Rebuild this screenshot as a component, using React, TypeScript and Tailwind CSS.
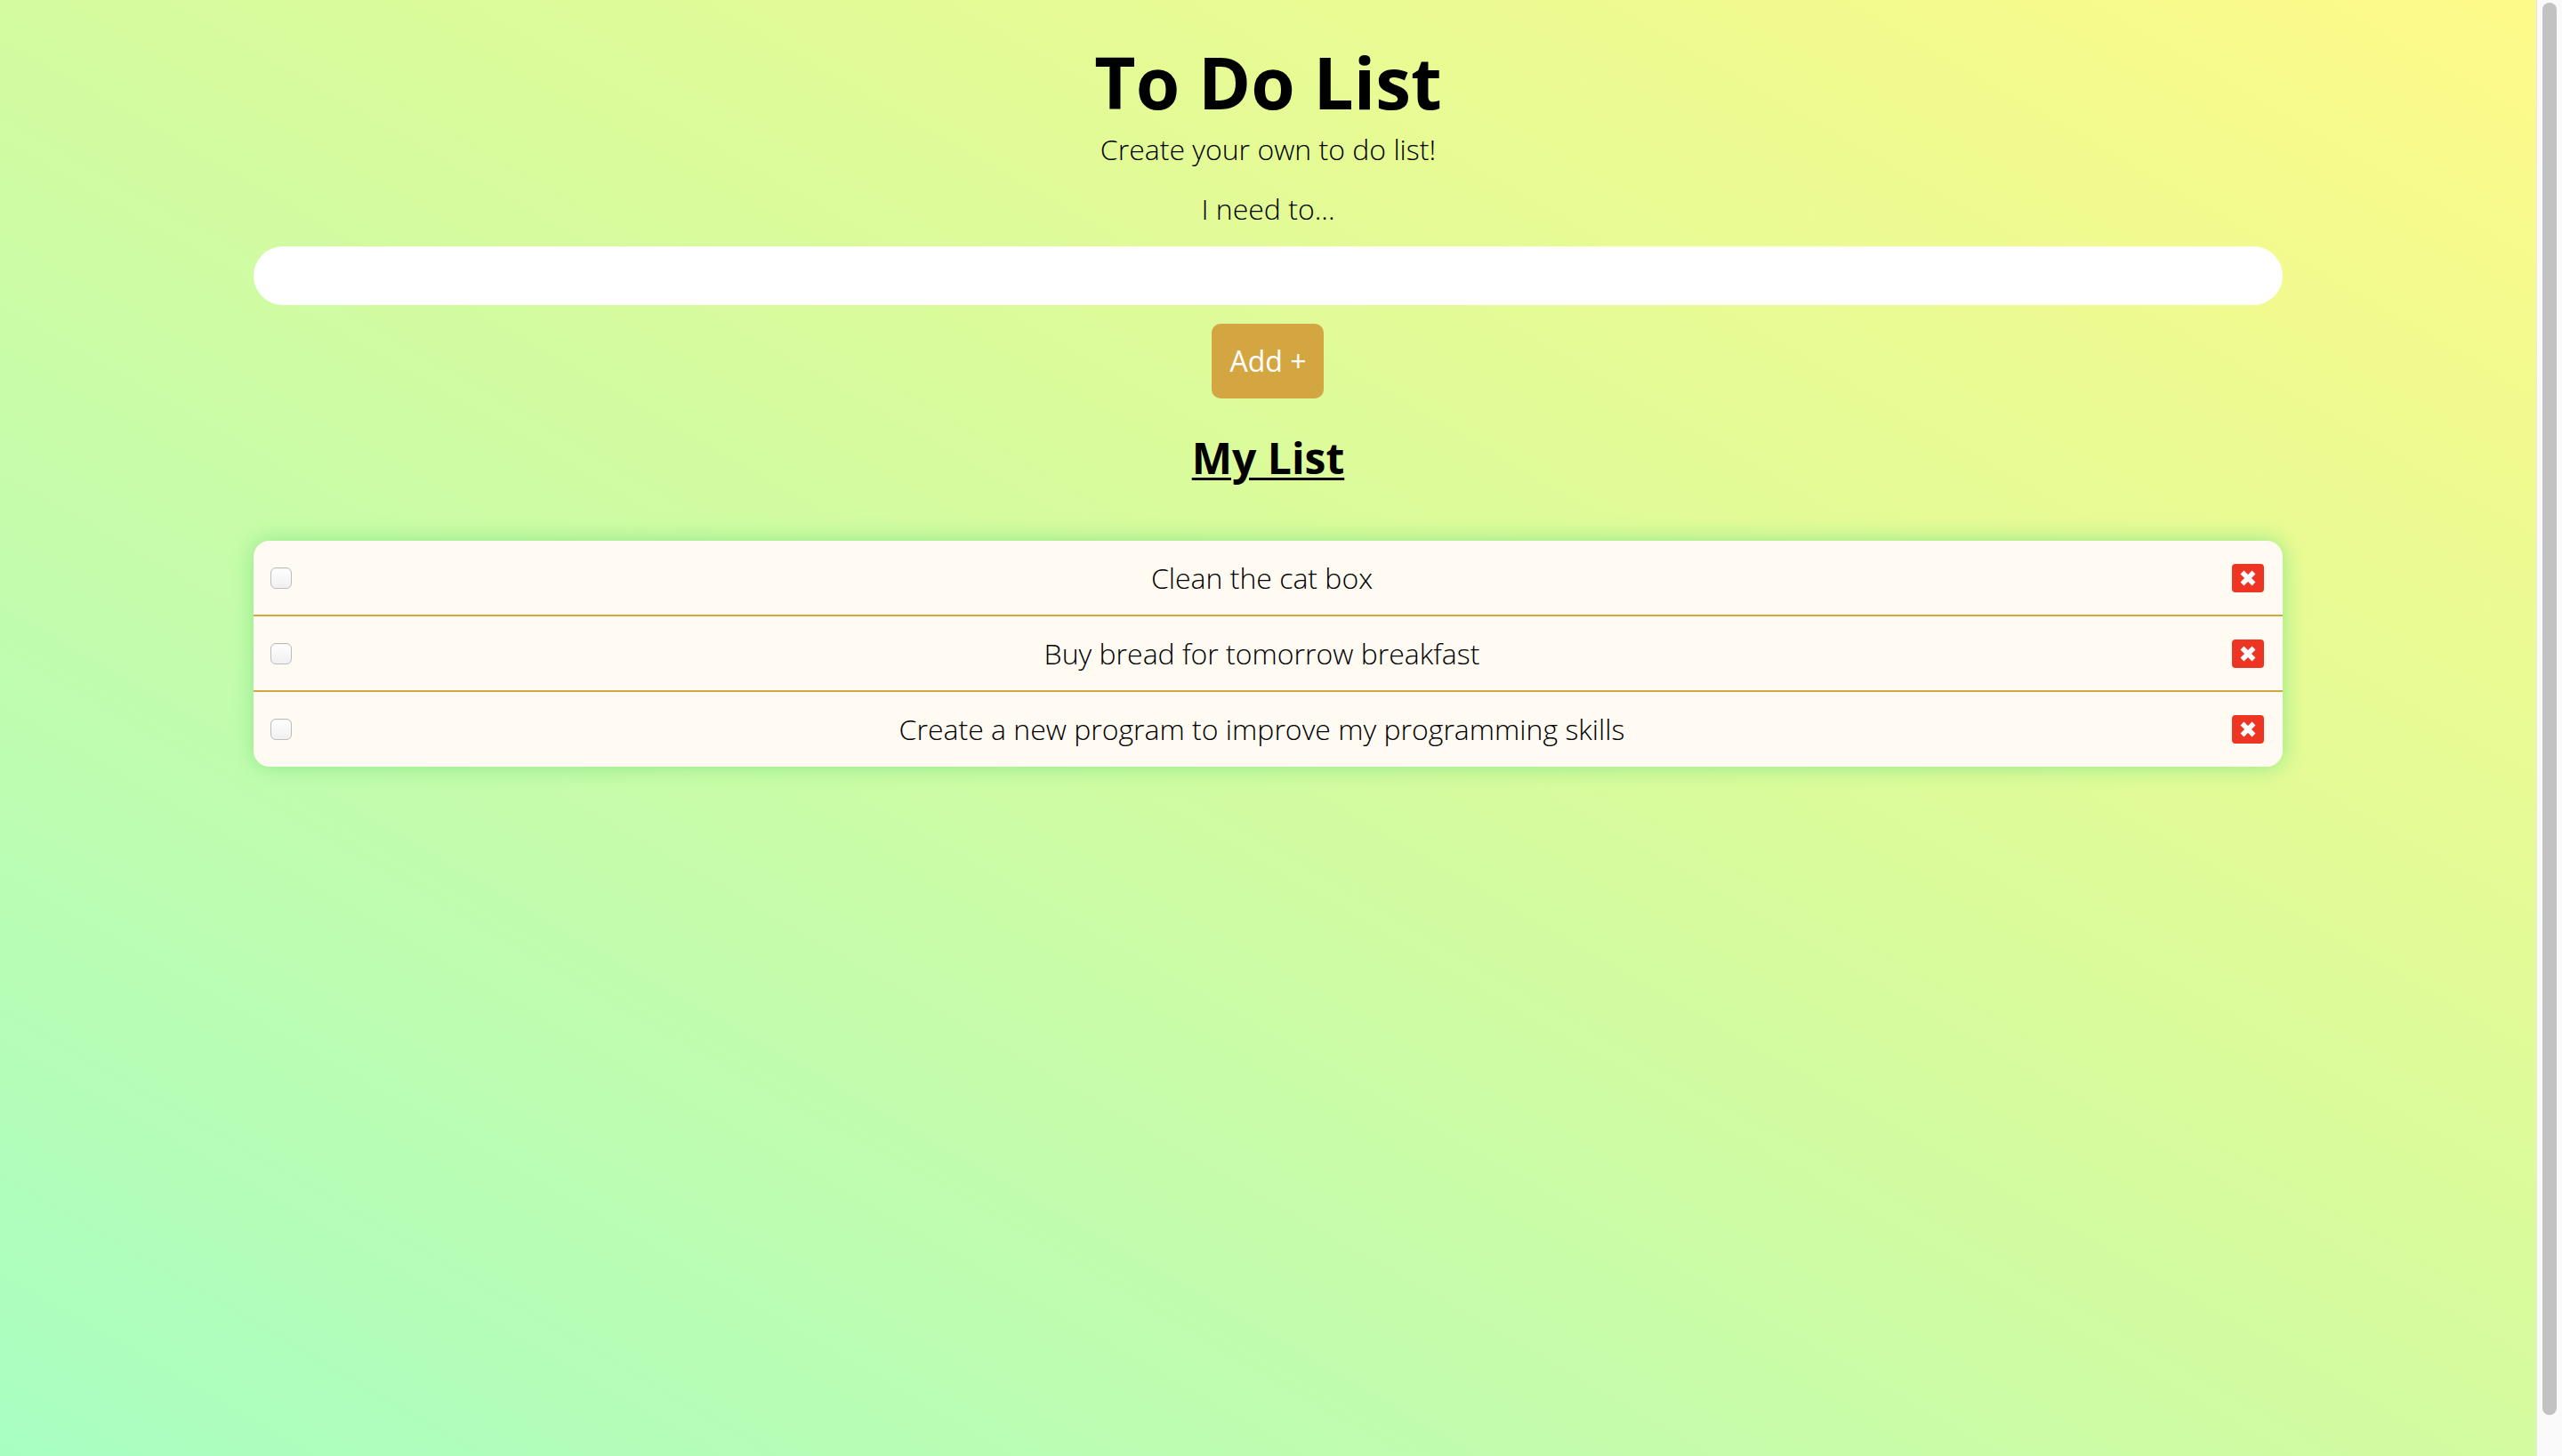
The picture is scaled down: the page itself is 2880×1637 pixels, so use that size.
const todos = [
  'Clean the cat box',
  'Buy bread for tomorrow breakfast',
  'Create a new program to improve my programming skills',
];

function DeleteIcon() {
  return (
    <span className="flex h-[32px] w-[36px] items-center justify-center rounded-[4px] bg-[#ee3524]">
      <svg width="20" height="20" viewBox="0 0 20 20">
        <path d="M3.5 3.5 L16.5 16.5 M16.5 3.5 L3.5 16.5" stroke="#ffffff" strokeWidth="5.5" />
      </svg>
    </span>
  );
}

export default function App() {
  return (
    <div className="flex h-screen w-full overflow-hidden font-['Open_Sans',sans-serif] text-black">
      <main className="flex-1 bg-[linear-gradient(to_top_right,#a8fec2,#d8fb9c_55%,#fefa89)] pt-[44px]">
        <div className="mx-auto flex w-4/5 flex-col items-center">
          <h1 className="text-[80px] font-bold leading-[96px]">To Do List</h1>
          <p className="mt-[6px] text-[32px] font-light leading-[44px]">Create your own to do list!</p>
          <label htmlFor="todo" className="mt-[23px] text-[32px] font-light leading-[44px]">
            I need to...
          </label>
          <input id="todo" type="text" className="mt-[20px] h-[66px] w-full rounded-full bg-white px-[30px] text-[32px] outline-none" />
          <button className="mt-[21px] h-[84px] w-[126px] rounded-[10px] bg-[#d4a642] text-[32px] leading-none text-white">
            Add +
          </button>
          <h2 className="mt-[38px] text-[48px] font-bold leading-[58px] underline decoration-[3px] underline-offset-[4px]">
            My List
          </h2>

          {/* list card */}
          <ul className="mt-[64px] w-full overflow-hidden rounded-[18px] bg-[#fffaf2] shadow-[0_0_24px_#8ee88a]">
            {todos.map((t) => (
              <li key={t} className="flex h-[85px] items-center border-b-2 border-[#d4a642] pl-[19px] pr-[21px] last:h-[84px] last:border-b-0">
                <input
                  type="checkbox"
                  className="h-[24px] w-[24px] appearance-none rounded-[6px] border border-[#bdbdbd] bg-[linear-gradient(#ffffff,#f0f0f0)] shadow-[inset_0_1px_1px_rgba(0,0,0,0.06)]"
                />
                <span className="flex-1 text-center text-[32px] font-light">{t}</span>
                <DeleteIcon />
              </li>
            ))}
          </ul>
        </div>
      </main>

      {/* scrollbar */}
      <aside className="w-[29px] border-l border-[#e8e8e8] bg-[#fafafa] py-[3px] pl-[6px] pr-[6px]">
        <div className="h-[1588px] rounded-full bg-[#c2c2c2]" />
      </aside>
    </div>
  );
}
